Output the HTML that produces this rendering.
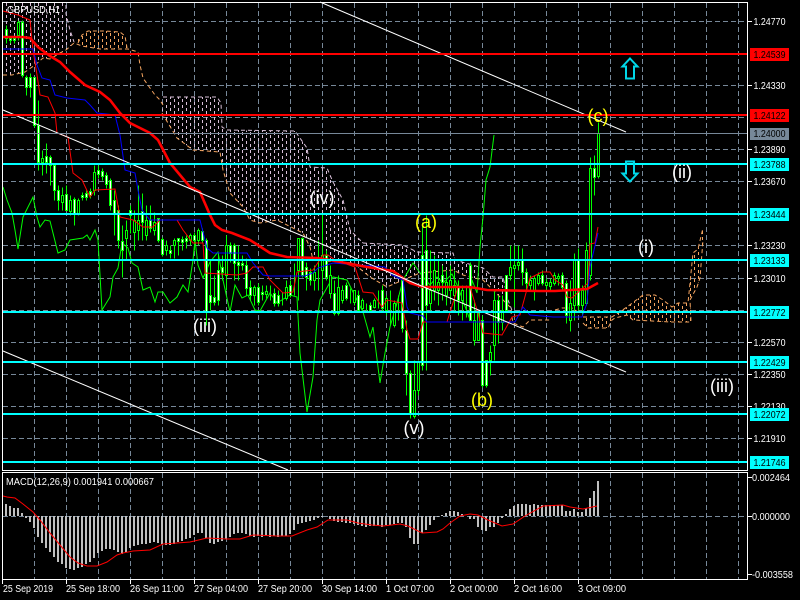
<!DOCTYPE html>
<html>
<head>
<meta charset="utf-8">
<style>
html,body{margin:0;padding:0;background:#000;width:800px;height:600px;overflow:hidden}
svg{display:block}
text{font-family:"Liberation Sans",sans-serif}
.ax{font-size:10px;fill:#fff}
.lb{font-size:10px;fill:#000}
.wv{font-size:18px;fill:#fff;text-anchor:middle}
.wy{font-size:18px;fill:#ffff00;text-anchor:middle}
</style>
</head>
<body>
<svg xmlns="http://www.w3.org/2000/svg" width="800" height="600" viewBox="0 0 800 600">
<defs>
<pattern id="ht" width="8" height="6" patternUnits="userSpaceOnUse"><rect x="2" y="0" width="1" height="3" fill="#d8bfd8"/><rect x="6" y="3" width="1" height="3" fill="#d8bfd8"/></pattern>
<pattern id="hp" width="8" height="6" patternUnits="userSpaceOnUse"><rect x="2" y="0" width="1" height="3" fill="#f4a460"/><rect x="6" y="3" width="1" height="3" fill="#f4a460"/></pattern>
</defs>
<rect width="800" height="600" fill="#000"/>

<!-- grid -->
<g stroke="#778899" stroke-width="1" stroke-dasharray="5 3" fill="none" shape-rendering="crispEdges">
<path d="M34.5 3V470M66.5 3V470M98.5 3V470M130.5 3V470M162.5 3V470M194.5 3V470M226.5 3V470M258.5 3V470M290.5 3V470M322.5 3V470M354.5 3V470M386.5 3V470M418.5 3V470M450.5 3V470M482.5 3V470M514.5 3V470M546.5 3V470M578.5 3V470M610.5 3V470M642.5 3V470M674.5 3V470M706.5 3V470M738.5 3V470"/>
<path d="M3 21.5H747M3 53.5H747M3 85.5H747M3 117.5H747M3 149.5H747M3 181.5H747M3 213.5H747M3 245.5H747M3 278.5H747M3 310.5H747M3 342.5H747M3 374.5H747M3 406.5H747M3 438.5H747"/>
<path d="M34.5 473V579M66.5 473V579M98.5 473V579M130.5 473V579M162.5 473V579M194.5 473V579M226.5 473V579M258.5 473V579M290.5 473V579M322.5 473V579M354.5 473V579M386.5 473V579M418.5 473V579M450.5 473V579M482.5 473V579M514.5 473V579M546.5 473V579M578.5 473V579M610.5 473V579M642.5 473V579M674.5 473V579M706.5 473V579M738.5 473V579"/>
<path d="M3 516.5H747"/>
</g>

<!-- cloud hatch -->
<g shape-rendering="crispEdges">
<path fill="url(#ht)" d="M3 3H66V14L70 30L74 42L66 50L60 53L50 59L43 58L35 65L25 72L12 75L3 74Z"/>
<path fill="url(#hp)" d="M74 42L82 35L88 31H105L120 32L125 36L127 48L100 49L82 46Z"/>
<path fill="url(#ht)" d="M163 97H217L221 103L222 127L227 130L295 131L307 148L310 167L327 168L333 182L343 200L350 230L363 243L403 245L417 252L453 253L455 260L483 268L493 277L503 277L508 300L513 313L523 327L510 307L503 300L483 280L463 275L453 270L420 273L403 280L387 287L370 277L353 263L313 260L310 247L303 233L277 220L260 223L250 220L243 207L230 193L223 170L220 152L193 150L177 138L162 113Z"/>
<path fill="url(#hp)" d="M583 317H612L615 315L627 307L643 295H655L663 300L672 307L678 303H688L693 253L698 249L703 228V240L700 278L697 287L690 300L691 322H670L633 320L627 315H615L612 320L608 328H588L583 323Z"/>
</g>
<g fill="none" stroke-width="1" stroke-dasharray="4 3">
<path stroke="#d8bfd8" d="M66 5V14L70 30L74 42"/>
<path stroke="#f4a460" d="M3 75L12 75L25 72L35 65L43 58L50 59L60 53L66 50L74 43L82 46L100 49L128 49L138 52L140 65L143 78L150 88L155 95L160 100L163 105"/>
<path stroke="#f4a460" d="M78 43L82 35L88 31H105L120 32L125 36L127 48"/>
<path stroke="#d8bfd8" d="M163 97H217L221 103L222 127L227 130L295 131L307 148L310 167L327 168L333 182L343 200L350 230L363 243L403 245L417 252L453 253L455 260L483 268L493 277L503 277L508 300L513 313"/>
<path stroke="#f4a460" d="M162 113L177 138L193 150L220 152L223 170L230 193L243 207L250 220L260 223L277 220L303 233L310 247L313 260L353 263L370 277L387 287L403 280L420 273L453 270L463 275L483 280L503 300L510 307L513 323L523 327L530 320H550"/>
<path stroke="#f4a460" d="M555 310L562 308H572L578 312"/>
<path stroke="#f4a460" d="M583 317H612L615 315L627 307L643 295H655L663 300L672 307L678 303H688L693 253L698 249L703 228"/>
<path stroke="#f4a460" d="M583 323L588 328H608L612 320L615 318L627 315L633 320L670 322H691L690 300L697 287L700 278L703 240"/>
</g>

<!-- chikou -->
<polyline fill="none" stroke="#00ff00" stroke-width="1" points="3,187 7,200 12,213 15,230 18,249 23,217 33,197 37,217 40,227 45,220 50,221 58,253 65,250 70,240 83,238 87,235 90,240 95,230 98,240 102,310 110,297 113,277 118,268 122,243 128,248 132,263 138,267 143,290 150,287 155,302 158,292 163,292 170,303 177,297 183,285 188,292 193,260 195,240 198,265 203,278 210,262 218,252 223,280 230,312 235,285 242,298 248,295 255,310 260,311 270,293 277,303 290,295 297,297 300,353 307,412 313,377 317,320 320,300 333,277 347,280 363,312 370,337 373,327 380,383 385,353 390,327 397,303 403,280 413,263 423,277 430,285 437,277 443,283 452,274 458,287 470,320 472,280 477,293 480,247 483,217 486,180 490,167 494,135"/>

<!-- candles -->
<g transform="translate(.5 .5)" shape-rendering="crispEdges">
<path fill="none" stroke="#00ff00" d="M6 25V43M10 37V43M14 37V43M18 20V40M22 20V77M26 75V95M30 73V97M34 77V127M38 100V170M42 150V175M46 143V173M50 155V185M54 165V200M58 185V210M62 187V210M66 185V210M70 195V215M74 197V225M78 198V215M82 192V200M86 190V200M90 188V198M94 165V195M98 165V178M102 168V180M106 172V188M110 178V210M114 190V235M118 205V248M122 225V277M126 220V260M130 205V233M134 210V250M138 185V240M142 193V240M146 205V240M150 205V232M154 212V235M158 218V242M162 237V256M166 240V255M170 245V258M174 238V258M178 238V255M182 236V250M186 235V248M190 233V245M194 232V250M198 228V245M202 228V243M206 238V325M210 260V310M214 275V305M218 252V305M222 255V280M226 235V290M230 242V262M234 243V280M238 245V280M242 255V270M246 258V295M250 280V300M254 285V305M258 283V305M262 285V300M266 285V298M270 285V300M274 288V306M278 290V306M282 292V305M286 280V300M290 280V297M294 263V295M298 238V300M302 237V277M306 262V290M310 268V285M314 265V290M318 240V290M322 213V290M326 250V280M330 265V298M334 280V315M338 275V315M342 285V303M346 282V300M350 288V303M354 290V305M358 290V312M362 298V310M366 303V312M370 302V311M374 298V308M378 290V308M382 285V312M386 295V315M390 290V325M394 300V327M398 295V320M402 278V332M406 320V395M410 370V418M414 360V418M418 360V395M422 222V370M426 215V370M430 250V310M434 255V300M438 260V305M442 265V300M446 270V305M450 265V300M454 270V310M458 280V315M462 285V320M466 285V317M470 262V320M474 300V345M478 313V340M482 315V387M486 360V387M490 345V375M494 290V360M498 295V343M502 295V330M506 275V312M510 245V280M514 245V307M518 245V270M522 248V285M526 268V290M530 275V290M534 275V300M538 272V285M542 270V285M546 278V290M550 278V290M554 272V285M558 273V285M562 272V290M566 280V323M570 280V331M574 253V320M578 248V310M582 285V315M586 242V305M590 157V280M594 155V195M598 122V178"/>
<path fill="#fff" stroke="#00ff00" d="M5 29h2v9h-2zM9 38h2v2h-2zM13 38h2v2h-2zM21 22h2v53h-2zM25 77h2v10h-2zM29 77h2v10h-2zM33 77h2v48h-2zM37 125h2v37h-2zM45 156h2v6h-2zM49 157h2v8h-2zM53 165h2v25h-2zM57 190h2v10h-2zM65 194h2v16h-2zM73 199h2v15h-2zM81 195h2v2h-2zM85 193h2v4h-2zM89 191h2v4h-2zM97 170h2v4h-2zM101 171h2v5h-2zM105 175h2v9h-2zM109 180h2v25h-2zM113 200h2v13h-2zM117 210h2v30h-2zM121 241h2v9h-2zM129 210h2v5h-2zM141 211h2v11h-2zM149 220h2v8h-2zM157 218h2v22h-2zM161 239h2v15h-2zM169 250h2v3h-2zM177 238h2v3h-2zM181 239h2v3h-2zM185 238h2v3h-2zM193 235h2v5h-2zM201 231h2v9h-2zM205 240h2v72h-2zM209 295h2v7h-2zM213 297h2v5h-2zM217 270h2v30h-2zM221 267h2v5h-2zM229 245h2v8h-2zM233 245h2v18h-2zM237 262h2v3h-2zM241 263h2v2h-2zM245 265h2v23h-2zM249 287h2v8h-2zM257 287h2v15h-2zM261 292h2v2h-2zM273 293h2v10h-2zM277 295h2v8h-2zM289 285h2v10h-2zM301 238h2v37h-2zM305 267h2v10h-2zM309 272h2v8h-2zM325 255h2v22h-2zM333 293h2v20h-2zM345 285h2v13h-2zM357 295h2v15h-2zM369 305h2v5h-2zM381 290h2v18h-2zM401 280h2v48h-2zM405 330h2v43h-2zM409 373h2v40h-2zM421 255h2v110h-2zM425 250h2v55h-2zM441 275h2v7h-2zM457 287h2v13h-2zM469 265h2v55h-2zM481 320h2v65h-2zM485 360h2v25h-2zM497 300h2v22h-2zM505 275h2v35h-2zM521 260h2v12h-2zM525 272h2v11h-2zM541 275h2v8h-2zM561 275h2v12h-2zM565 283h2v32h-2zM577 260h2v45h-2zM593 168h2v9h-2z"/>
<path fill="#000" stroke="#00ff00" d="M17 22h2v13h-2zM41 158h2v4h-2zM61 195h2v7h-2zM69 200h2v11h-2zM77 200h2v13h-2zM93 172h2v18h-2zM125 230h2v8h-2zM133 220h2v12h-2zM137 220h2v10h-2zM145 220h2v15h-2zM153 222h2v8h-2zM165 245h2v5h-2zM173 240h2v5h-2zM189 235h2v5h-2zM197 230h2v10h-2zM225 245h2v30h-2zM253 287h2v8h-2zM265 291h2v3h-2zM285 287h2v11h-2zM297 238h2v32h-2zM313 272h2v8h-2zM321 255h2v15h-2zM329 275h2v18h-2zM337 287h2v26h-2zM341 290h2v10h-2zM353 290h2v12h-2zM361 300h2v8h-2zM373 300h2v7h-2zM385 298h2v12h-2zM393 303h2v22h-2zM413 390h2v26h-2zM417 362h2v28h-2zM429 290h2v13h-2zM433 270h2v20h-2zM437 282h2v8h-2zM445 282h2v13h-2zM449 280h2v10h-2zM453 285h2v10h-2zM461 290h2v10h-2zM473 320h2v20h-2zM477 313h2v27h-2zM489 352h2v8h-2zM493 300h2v45h-2zM501 310h2v12h-2zM509 267h2v8h-2zM513 265h2v3h-2zM517 262h2v3h-2zM529 280h2v5h-2zM533 278h2v12h-2zM537 275h2v8h-2zM545 282h2v3h-2zM549 282h2v4h-2zM553 275h2v8h-2zM557 276h2v2h-2zM569 303h2v17h-2zM573 260h2v45h-2zM581 290h2v15h-2zM585 250h2v53h-2zM589 168h2v107h-2zM597 133h2v43h-2z"/>
</g>

<!-- tenkan, kijun, MA -->
<g fill="none">
<polyline stroke="#ff0000" stroke-width="1" points="3,11 18,15 30,20 33,50 37,75 40,95 48,97 55,113 57,133 68,137 73,173 82,180 90,197 95,190 115,189 120,217 133,220 143,227 153,227 160,220 177,220 183,230 193,243 203,243 205,273 237,275 247,273 253,267 263,267 270,280 283,293 293,292 297,272 313,270 323,255 328,255 335,260 355,267 363,292 373,293 382,307 387,300 402,303 407,330 410,339 418,339 423,322 447,322 458,287 470,287 478,313 483,333 502,335 512,317 520,315 530,278 542,272 550,272 555,280 563,285 567,297 572,298 588,283 590,244 595,243 598,227"/>
<polyline stroke="#0000ff" stroke-width="1" points="3,49 33,49 37,65 42,78 50,80 55,95 67,98 85,100 90,105 97,113 115,115 120,135 125,170 135,173 138,190 142,210 150,220 200,220 205,240 207,248 213,253 247,253 253,263 263,275 270,276 305,276 313,273 318,268 333,263 385,267 392,275 403,280 407,307 410,313 423,316 427,322 515,322 523,307 530,315 553,317 582,317 587,303 590,267 598,233"/>
<polyline stroke="#ff0000" stroke-width="2.6" points="3,37 22,37 30,38 38,47 50,56 60,62 70,72 85,85 100,92 110,100 120,113 130,123 150,133 158,140 170,163 180,175 190,187 200,192 210,215 215,225 222,230 232,233 250,240 270,253 287,257 317,258 330,260 367,267 393,271 410,283 423,287 470,287 487,290 540,291 555,291 587,289 598,283"/>
</g>

<!-- trend lines -->
<g stroke="#fff" stroke-width="1" fill="none">
<path d="M320 2L626 132"/>
<path d="M3 110L626 372"/>
<path d="M3 351L288 470"/>
</g>

<!-- levels -->
<g shape-rendering="crispEdges">
<rect x="3" y="133" width="744" height="1" fill="#778899"/>
<rect x="3" y="53" width="744" height="2" fill="#ff0000"/>
<rect x="3" y="114" width="744" height="2" fill="#ff0000"/>
<rect x="3" y="163" width="744" height="2" fill="#00ffff"/>
<rect x="3" y="213" width="744" height="2" fill="#00ffff"/>
<rect x="3" y="259" width="744" height="2" fill="#00ffff"/>
<rect x="3" y="311" width="744" height="2" fill="#00ffff"/>
<rect x="3" y="361" width="744" height="2" fill="#00ffff"/>
<rect x="3" y="413" width="744" height="2" fill="#00ffff"/>
<rect x="3" y="461" width="744" height="2" fill="#00ffff"/>
</g>

<!-- arrows -->
<g fill="none" stroke="#00d8e8" stroke-width="2">
<path d="M630 58.5L637.5 66.5H634V78.5H626V66.5H622.5Z"/>
<path d="M630 181.5L637.5 173.5H634V161.5H626V173.5H622.5Z"/>
</g>

<!-- MACD -->
<path fill="none" stroke="#c0c0c0" stroke-width="2" d="M6 516V504M10 516V506M14 516V508M18 516V508M22 516V513M26 516V518M30 516V522M34 516V528M38 516V537M42 516V543M46 516V548M50 516V552M54 516V557M58 516V562M62 516V564M66 516V568M70 516V569M74 516V570M78 516V568M82 516V567M86 516V564M90 516V562M94 516V558M98 516V553M102 516V551M106 516V549M110 516V549M114 516V550M118 516V552M122 516V554M126 516V552M130 516V548M134 516V546M138 516V545M142 516V544M146 516V544M150 516V543M154 516V542M158 516V543M162 516V544M166 516V545M170 516V545M174 516V544M178 516V542M182 516V541M186 516V539M190 516V538M194 516V535M198 516V533M202 516V533M206 516V538M210 516V543M214 516V544M218 516V542M222 516V541M226 516V539M230 516V537M234 516V534M238 516V533M242 516V533M246 516V534M250 516V536M254 516V537M258 516V536M262 516V537M266 516V536M270 516V537M274 516V536M278 516V537M282 516V536M286 516V536M290 516V534M294 516V530M298 516V524M302 516V523M306 516V522M310 516V521M314 516V520M318 516V518M322 516V517M330 516V519M334 516V521M338 516V522M342 516V522M346 516V523M350 516V523M354 516V524M358 516V525M362 516V526M366 516V527M370 516V526M374 516V526M378 516V525M382 516V527M386 516V525M390 516V525M394 516V524M398 516V523M402 516V523M406 516V527M410 516V538M414 516V544M418 516V544M422 516V533M426 516V530M430 516V525M434 516V520M438 516V517M442 516V515M446 516V513M450 516V511M454 516V511M458 516V512M462 516V514M470 516V519M474 516V519M478 516V527M482 516V530M486 516V531M490 516V527M494 516V527M498 516V523M502 516V518M506 516V514M510 516V509M514 516V506M518 516V504M522 516V504M526 516V504M530 516V505M534 516V504M538 516V505M542 516V505M546 516V505M550 516V505M554 516V505M558 516V505M562 516V505M566 516V511M570 516V511M574 516V509M578 516V512M582 516V512M586 516V508M590 516V498M594 516V491M598 516V481"/>
<polyline fill="none" stroke="#ff0000" stroke-width="1" points="3,496 7,497 15,498 23,504 33,512 40,520 50,533 60,545 70,557 78,563 87,566 97,566 107,562 117,555 123,553 133,551 150,550 163,544 177,543 190,542 207,538 227,539 240,539 253,535 277,536 292,536 307,530 317,527 328,520 347,520 358,523 372,525 383,526 400,524 408,526 422,533 437,532 443,529 450,523 460,516 470,514 478,515 488,520 502,526 513,524 525,516 543,506 563,505 570,507 583,509 597,506"/>

<!-- frame -->
<g fill="none" stroke="#fff" stroke-width="1" shape-rendering="crispEdges">
<path d="M2.5 2.5H747.5V470.5H2.5Z"/>
<path d="M2.5 472.5H747.5V579.5H2.5Z"/>
<path d="M747 21.5h5M747 85.5h5M747 149.5h5M747 181.5h5M747 245.5h5M747 278.5h5M747 342.5h5M747 374.5h5M747 406.5h5M747 438.5h5M747 477.5h5M747 516.5h5M747 574.5h5"/>
<path d="M2.5 580V584M66.5 580V584M130.5 580V584M194.5 580V584M258.5 580V584M322.5 580V584M386.5 580V584M450.5 580V584M514.5 580V584M578.5 580V584"/>
</g>

<!-- axis text -->
<g class="ax">
<text class="ax" x="753.5" y="25" textLength="32" lengthAdjust="spacingAndGlyphs">1.24770</text>
<text class="ax" x="753.5" y="89" textLength="32" lengthAdjust="spacingAndGlyphs">1.24330</text>
<text class="ax" x="753.5" y="153" textLength="32" lengthAdjust="spacingAndGlyphs">1.23890</text>
<text class="ax" x="753.5" y="185" textLength="32" lengthAdjust="spacingAndGlyphs">1.23670</text>
<text class="ax" x="753.5" y="249" textLength="32" lengthAdjust="spacingAndGlyphs">1.23230</text>
<text class="ax" x="753.5" y="282" textLength="32" lengthAdjust="spacingAndGlyphs">1.23010</text>
<text class="ax" x="753.5" y="346" textLength="32" lengthAdjust="spacingAndGlyphs">1.22570</text>
<text class="ax" x="753.5" y="378" textLength="32" lengthAdjust="spacingAndGlyphs">1.22350</text>
<text class="ax" x="753.5" y="410" textLength="32" lengthAdjust="spacingAndGlyphs">1.22130</text>
<text class="ax" x="753.5" y="442" textLength="32" lengthAdjust="spacingAndGlyphs">1.21910</text>
<text class="ax" x="752" y="481" textLength="38" lengthAdjust="spacingAndGlyphs">0.002464</text>
<text class="ax" x="752" y="520" textLength="38" lengthAdjust="spacingAndGlyphs">0.000000</text>
<text class="ax" x="752" y="578" textLength="41" lengthAdjust="spacingAndGlyphs">-0.003558</text>
</g>

<!-- price tags -->
<g shape-rendering="crispEdges">
<rect x="750" y="48" width="39" height="13" fill="#ff0000"/>
<rect x="750" y="109" width="39" height="13" fill="#ff0000"/>
<rect x="750" y="128" width="39" height="12" fill="#778899"/>
<rect x="750" y="158" width="39" height="13" fill="#00ffff"/>
<rect x="750" y="208" width="39" height="13" fill="#00ffff"/>
<rect x="750" y="254" width="39" height="13" fill="#00ffff"/>
<rect x="750" y="306" width="39" height="13" fill="#00ffff"/>
<rect x="750" y="356" width="39" height="13" fill="#00ffff"/>
<rect x="750" y="408" width="39" height="13" fill="#00ffff"/>
<rect x="750" y="456" width="39" height="13" fill="#00ffff"/>
</g>
<text class="lb" x="753.5" y="58" textLength="32" lengthAdjust="spacingAndGlyphs">1.24539</text>
<text class="lb" x="753.5" y="119" textLength="32" lengthAdjust="spacingAndGlyphs">1.24122</text>
<text class="lb" x="753.5" y="137" textLength="32" lengthAdjust="spacingAndGlyphs">1.24000</text>
<text class="lb" x="753.5" y="168" textLength="32" lengthAdjust="spacingAndGlyphs">1.23788</text>
<text class="lb" x="753.5" y="218" textLength="32" lengthAdjust="spacingAndGlyphs">1.23444</text>
<text class="lb" x="753.5" y="264" textLength="32" lengthAdjust="spacingAndGlyphs">1.23133</text>
<text class="lb" x="753.5" y="316" textLength="32" lengthAdjust="spacingAndGlyphs">1.22772</text>
<text class="lb" x="753.5" y="366" textLength="32" lengthAdjust="spacingAndGlyphs">1.22429</text>
<text class="lb" x="753.5" y="418" textLength="32" lengthAdjust="spacingAndGlyphs">1.22072</text>
<text class="lb" x="753.5" y="466" textLength="32" lengthAdjust="spacingAndGlyphs">1.21746</text>

<!-- time axis -->
<g>
<text class="ax" x="3" y="592" textLength="50" lengthAdjust="spacingAndGlyphs">25 Sep 2019</text>
<text class="ax" x="66" y="592" textLength="54" lengthAdjust="spacingAndGlyphs">25 Sep 18:00</text>
<text class="ax" x="130" y="592" textLength="54" lengthAdjust="spacingAndGlyphs">26 Sep 11:00</text>
<text class="ax" x="194" y="592" textLength="54" lengthAdjust="spacingAndGlyphs">27 Sep 04:00</text>
<text class="ax" x="258" y="592" textLength="54" lengthAdjust="spacingAndGlyphs">27 Sep 20:00</text>
<text class="ax" x="322" y="592" textLength="55" lengthAdjust="spacingAndGlyphs">30 Sep 14:00</text>
<text class="ax" x="386" y="592" textLength="48" lengthAdjust="spacingAndGlyphs">1 Oct 07:00</text>
<text class="ax" x="450" y="592" textLength="48" lengthAdjust="spacingAndGlyphs">2 Oct 00:00</text>
<text class="ax" x="514" y="592" textLength="48" lengthAdjust="spacingAndGlyphs">2 Oct 16:00</text>
<text class="ax" x="578" y="592" textLength="48" lengthAdjust="spacingAndGlyphs">3 Oct 09:00</text>
</g>

<text class="ax" x="7" y="13" textLength="53" lengthAdjust="spacingAndGlyphs">GBPUSD,H1</text>
<text class="ax" x="6" y="485" textLength="148" lengthAdjust="spacingAndGlyphs">MACD(12,26,9) 0.001941 0.000667</text>

<!-- wave labels -->
<text class="wv" x="205" y="332">(iii)</text>
<text class="wv" x="322" y="204">(iv)</text>
<text class="wy" x="426" y="228">(a)</text>
<text class="wv" x="414" y="434">(v)</text>
<text class="wy" x="482" y="406">(b)</text>
<text class="wy" x="598" y="122">(c)</text>
<text class="wv" x="682" y="178">(ii)</text>
<text class="wv" x="646" y="253">(i)</text>
<text class="wv" x="722" y="392">(iii)</text>
</svg>
</body>
</html>
